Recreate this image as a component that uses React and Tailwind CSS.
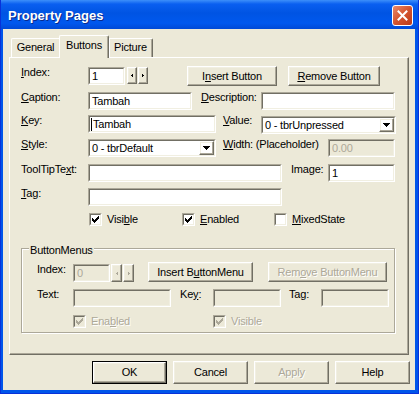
const dis = 'text-[#ACA899] [text-shadow:1px_1px_0_#fff]'

const checkPath = [2, 3, 4, 3, 2, 1, 0]
  .map((r, i) => `M${i + 1} ${r + 1}h1v3h-1z`)
  .join('')

function U({ children }) {
  return <span className="underline decoration-1 underline-offset-[1px]">{children}</span>
}

function Label({ className = '', disabled, children }) {
  return (
    <div className={`shrink-0 whitespace-nowrap leading-[13px] ${disabled ? dis : ''} ${className}`}>
      {children}
    </div>
  )
}

function Field({ className = '', value, caret, disabled }) {
  return (
    <div className={`h-[18px] shrink-0 border border-t-[#ACA899] border-l-[#ACA899] border-b-white border-r-white ${className}`}>
      <div
        className={`flex h-full items-center border border-t-[#716F64] border-l-[#716F64] border-b-[#F1EFE2] border-r-[#F1EFE2] leading-[14px] ${caret ? 'pl-[1px]' : 'pl-[2px]'} ${disabled ? 'bg-[#ECE9D8] text-[#ACA899]' : 'bg-white'}`}
      >
        {caret && <span className="mr-[1px] h-[13px] w-px bg-black" />}
        {value}
      </div>
    </div>
  )
}

function Raised({ className = '', children }) {
  return (
    <div className={`flex h-full items-center justify-center border border-t-white border-l-white border-b-[#716F64] border-r-[#716F64] shadow-[inset_-1px_-1px_0_#ACA899,inset_1px_1px_0_#F1EFE2] ${className}`}>
      {children}
    </div>
  )
}

function Button({ className = '', disabled, isDefault, children }) {
  return (
    <div className={`shrink-0 leading-[13px] ${isDefault ? 'border border-black' : ''} ${className}`}>
      <Raised className={disabled ? dis : ''}>{children}</Raised>
    </div>
  )
}

function Spin({ className = '', dir, disabled }) {
  return (
    <div className={`shrink-0 ${className}`}>
      <Raised>
        <svg width="2" height="3" viewBox="0 0 2 3" className="block">
          <path
            d={dir === 'left' ? 'M0 1h1v1H0z M1 0h1v3H1z' : 'M0 0h1v3H0z M1 1h1v1H1z'}
            fill={disabled ? '#ACA899' : '#000'}
          />
        </svg>
      </Raised>
    </div>
  )
}

function Combo({ className = '', value }) {
  return (
    <div className={`h-[18px] shrink-0 border border-t-[#ACA899] border-l-[#ACA899] border-b-white border-r-white ${className}`}>
      <div className="flex h-full border border-t-[#716F64] border-l-[#716F64] border-b-[#F1EFE2] border-r-[#F1EFE2] bg-white">
        <div className="flex flex-1 items-center pl-[2px] leading-[14px]">{value}</div>
        <div className="h-full w-[15px]">
          <Raised>
            <svg width="7" height="4" viewBox="0 0 7 4" className="block">
              <path d="M0 0h7v1H0z M1 1h5v1H1z M2 2h3v1H2z M3 3h1v1H3z" fill="#000" />
            </svg>
          </Raised>
        </div>
      </div>
    </div>
  )
}

function Check({ checked, disabled }) {
  return (
    <div className="h-[13px] w-[13px] shrink-0 border border-t-[#ACA899] border-l-[#ACA899] border-b-white border-r-white">
      <div className={`h-full w-full border border-t-[#716F64] border-l-[#716F64] border-b-[#F1EFE2] border-r-[#F1EFE2] ${disabled ? 'bg-[#ECE9D8]' : 'bg-white'}`}>
        {checked && (
          <svg width="9" height="9" viewBox="0 0 9 9" className="block">
            <path d={checkPath} fill={disabled ? '#ACA899' : '#000'} />
          </svg>
        )}
      </div>
    </div>
  )
}

function CheckItem({ className = '', checked, disabled, children }) {
  return (
    <div className={`flex shrink-0 items-center ${className}`}>
      <Check checked={checked} disabled={disabled} />
      <Label className="ml-[5px]" disabled={disabled}>{children}</Label>
    </div>
  )
}

function TitleBar() {
  return (
    <div className="flex h-[29px] shrink-0 items-start bg-[linear-gradient(180deg,#3D8FFA_0%,#0A5FF0_14%,#0054E3_45%,#0058EE_80%,#0049D6_100%)]">
      <div className="pl-[7px] pt-[8px] text-[13px] font-bold leading-[16px] tracking-normal text-white [text-shadow:1px_1px_0_#0A2A8C]">
        Property Pages
      </div>
      <div className="ml-auto mr-[5px] mt-[5px] flex h-[21px] w-[21px] items-center justify-center rounded-[3px] border border-white bg-[linear-gradient(135deg,#EA8A6A_0%,#D4542F_50%,#BC3A18_100%)]">
        <svg width="11" height="11" viewBox="0 0 11 11" className="block">
          <path d="M1.5 1.5l8 8M9.5 1.5l-8 8" stroke="#fff" strokeWidth="2" strokeLinecap="square" />
        </svg>
      </div>
    </div>
  )
}

function Tabs() {
  return (
    <div className="flex h-[22px] shrink-0 items-end pl-[8px]">
      <div className="h-[19px] w-[48px] rounded-tl-[2px] border-l border-t border-white pt-[2px] text-center leading-[13px]">
        General
      </div>
      <div className="relative z-10 -mb-px h-[23px] w-[50px] rounded-t-[2px] border-l border-r border-t border-l-white border-t-white border-r-[#716F64] bg-[#ECE9D8] pt-[3px] text-center leading-[13px] shadow-[inset_-1px_0_0_#ACA899]">
        Buttons
      </div>
      <div className="h-[19px] w-[44px] rounded-tr-[2px] border-r border-t border-t-white border-r-[#716F64] pt-[2px] text-center leading-[13px] shadow-[inset_-1px_0_0_#ACA899,inset_1px_0_0_#fff]">
        Picture
      </div>
    </div>
  )
}

function ButtonMenus() {
  return (
    <div className="relative mt-[22px] h-[85px] w-[374px] border border-[#ACA899] shadow-[inset_1px_1px_0_#fff,1px_1px_0_#fff]">
      <div className="absolute -top-[5px] left-[7px] bg-[#ECE9D8] px-[1px] leading-[13px]">ButtonMenus</div>
      <div className="pl-[15px] pt-[13px]">
        <div className="flex h-[27px] items-start">
          <Label className="mt-[1px] w-[36px]">Index:</Label>
          <Field className="mt-[2px] w-[37px]" value="0" disabled />
          <Spin className="ml-[1px] mt-[2px] h-[18px] w-[11px]" dir="left" disabled />
          <Spin className="ml-[1px] mt-[2px] h-[18px] w-[11px]" dir="right" disabled />
          <Button className="ml-[14px] h-[20px] w-[105px]">Insert B<U>u</U>ttonMenu</Button>
          <Button className="ml-[15px] h-[20px] w-[119px]" disabled>Rem<U>o</U>ve ButtonMenu</Button>
        </div>
        <div className="flex h-[26px] items-start">
          <Label className="-mt-px w-[36px]">Text:</Label>
          <Field className="w-[98px]" disabled />
          <Label className="ml-[9px] -mt-px w-[33px]">Ke<U>y</U>:</Label>
          <Field className="w-[68px]" disabled />
          <Label className="ml-[8px] -mt-px w-[32px]">Tag:</Label>
          <Field className="w-[68px]" disabled />
        </div>
        <div className="flex items-start pl-[36px]">
          <CheckItem className="w-[140px]" checked disabled>Ena<U>b</U>led</CheckItem>
          <CheckItem checked disabled>Visible</CheckItem>
        </div>
      </div>
    </div>
  )
}

function ButtonsPage() {
  return (
    <div className="mx-[6px] h-[298px] shrink-0 border border-t-white border-l-white border-b-[#716F64] border-r-[#716F64] pl-[11px] pt-[8px] shadow-[inset_-1px_-1px_0_#ACA899]">
      <div className="flex h-[26px] items-start">
        <Label className="w-[67px]"><U>I</U>ndex:</Label>
        <Field className="mt-px w-[37px]" value="1" />
        <Spin className="ml-[2px] mt-px h-[17px] w-[10px]" dir="left" />
        <Spin className="ml-px mt-px h-[17px] w-[10px]" dir="right" />
        <Button className="ml-[39px] h-[20px] w-[90px]">I<U>n</U>sert Button</Button>
        <Button className="ml-[11px] h-[20px] w-[92px]"><U>R</U>emove Button</Button>
      </div>
      <div className="flex h-[23px] items-start">
        <Label className="-mt-px w-[67px]"><U>C</U>aption:</Label>
        <Field className="w-[104px]" value="Tambah" />
        <Label className="ml-[9px] -mt-px w-[60px]"><U>D</U>escription:</Label>
        <Field className="w-[134px]" />
      </div>
      <div className="flex h-[24px] items-start">
        <Label className="-mt-px w-[67px]"><U>K</U>ey:</Label>
        <Field className="w-[128px]" value="Tambah" caret />
        <Label className="ml-[7px] -mt-px w-[38px]"><U>V</U>alue:</Label>
        <Combo className="mt-px w-[135px]" value="0 - tbrUnpressed" />
      </div>
      <div className="flex h-[25px] items-start">
        <Label className="-mt-px w-[67px]"><U>S</U>tyle:</Label>
        <Combo className="w-[128px]" value="0 - tbrDefault" />
        <Label className="ml-[7px] -mt-px w-[105px]"><U>W</U>idth: (Placeholder)</Label>
        <Field className="w-[67px]" value="0.00" disabled />
      </div>
      <div className="flex h-[24px] items-start">
        <Label className="-mt-px w-[67px]">ToolTipTe<U>x</U>t:</Label>
        <Field className="w-[194px]" />
        <Label className="ml-[9px] -mt-px w-[37px]">Image:</Label>
        <Field className="w-[67px]" value="1" />
      </div>
      <div className="flex h-[25px] items-start">
        <Label className="-mt-px w-[67px]"><U>T</U>ag:</Label>
        <Field className="w-[194px]" />
      </div>
      <div className="flex h-[13px] items-start pl-[68px]">
        <CheckItem className="w-[93px]" checked>Visi<U>b</U>le</CheckItem>
        <CheckItem className="w-[92px]" checked><U>E</U>nabled</CheckItem>
        <CheckItem><U>M</U>ixedState</CheckItem>
      </div>
      <ButtonMenus />
    </div>
  )
}

export default function App() {
  return (
    <div className="h-[394px] w-[419px] overflow-hidden font-['Liberation_Sans',Arial,sans-serif] text-[11px] tracking-[-0.2px] text-black">
      <div className="flex h-full flex-col border-x border-b border-[#0831D9] bg-[#0055EA]">
        <TitleBar />
        <div className="mb-[3px] ml-[2px] mr-[3px] flex flex-1 flex-col bg-[#ECE9D8] pt-[6px]">
          <Tabs />
          <ButtonsPage />
          <div className="mt-[6px] flex justify-end gap-[6px] pr-[5px]">
            <Button className="h-[23px] w-[75px]" isDefault>OK</Button>
            <Button className="h-[23px] w-[75px]">Cancel</Button>
            <Button className="h-[23px] w-[75px]" disabled>Apply</Button>
            <Button className="h-[23px] w-[75px]">Help</Button>
          </div>
        </div>
      </div>
    </div>
  )
}
